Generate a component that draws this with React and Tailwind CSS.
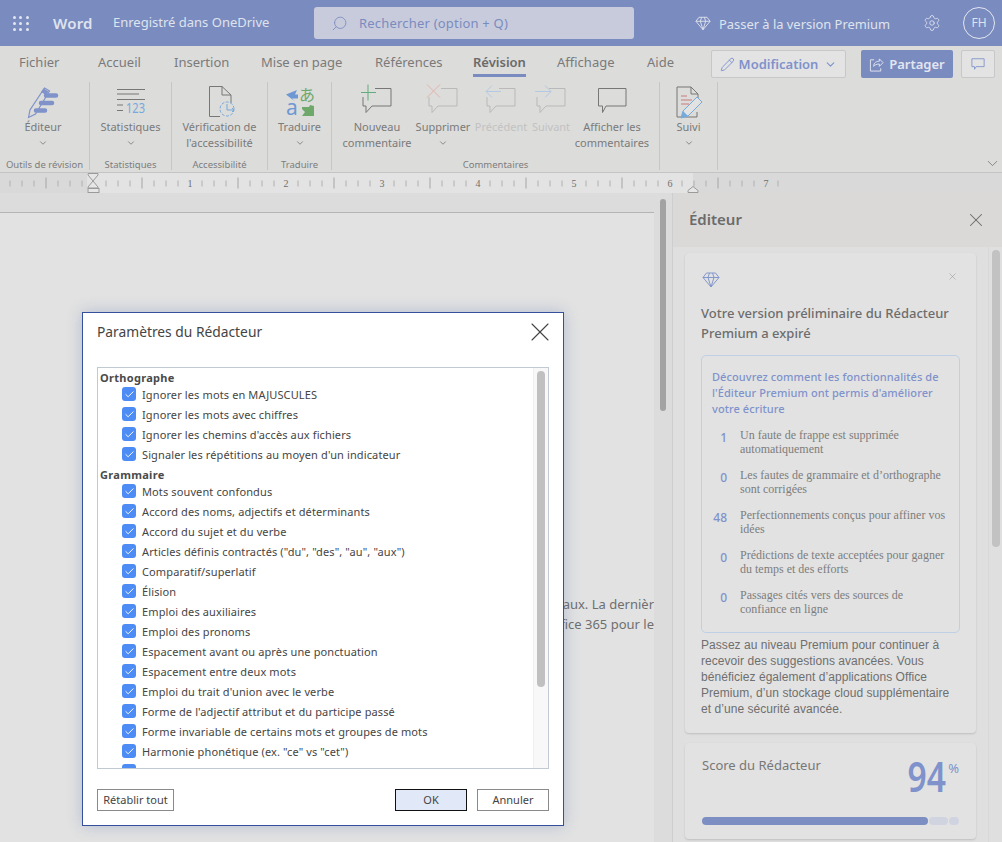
import { ChevronDown, Settings, Search, X, Pencil, Check } from 'lucide-react';

const tabs = [
  { label: 'Fichier', w: 'w-[79px]' },
  { label: 'Accueil', w: 'w-[76px]' },
  { label: 'Insertion', w: 'w-[87px]' },
  { label: 'Mise en page', w: 'w-[114px]' },
  { label: 'Références', w: 'w-[98px]' },
  { label: 'Révision', w: 'w-[84px]', active: true },
  { label: 'Affichage', w: 'w-[90px]' },
  { label: 'Aide', w: 'w-[64px]' },
];

const spelling = [
  'Ignorer les mots en MAJUSCULES',
  'Ignorer les mots avec chiffres',
  "Ignorer les chemins d'accès aux fichiers",
  "Signaler les répétitions au moyen d'un indicateur",
];

const grammar = [
  'Mots souvent confondus',
  'Accord des noms, adjectifs et déterminants',
  'Accord du sujet et du verbe',
  'Articles définis contractés ("du", "des", "au", "aux")',
  'Comparatif/superlatif',
  'Élision',
  'Emploi des auxiliaires',
  'Emploi des pronoms',
  'Espacement avant ou après une ponctuation',
  'Espacement entre deux mots',
  "Emploi du trait d'union avec le verbe",
  "Forme de l'adjectif attribut et du participe passé",
  'Forme invariable de certains mots et groupes de mots',
  'Harmonie phonétique (ex. "ce" vs "cet")',
  'Majuscules et minuscules dans les noms propres',
];

const stats = [
  { n: '1', text: 'Un faute de frappe est supprimée automatiquement' },
  { n: '0', text: 'Les fautes de grammaire et d’orthographe sont corrigées' },
  { n: '48', text: 'Perfectionnements conçus pour affiner vos idées' },
  { n: '0', text: 'Prédictions de texte acceptées pour gagner du temps et des efforts' },
  { n: '0', text: 'Passages cités vers des sources de confiance en ligne' },
];

function Diamond({ className, color }) {
  return (
    <svg viewBox="0 0 18 16" className={className} fill="none" stroke={color} strokeWidth="1">
      <path d="M4.5 1h9L17 5.5 9 15 1 5.5z" />
      <path d="M1 5.5h16M6 5.5L9 15l3-9.5M6 5.5L7.5 1M12 5.5L10.5 1" />
    </svg>
  );
}

function EditorIcon() {
  return (
    <svg viewBox="0 0 34 34" className="w-[34px] h-[34px]" fill="none">
      <path d="M2.5 32.5L4 25 18.5 3l5 3L9.5 29z" stroke="#7f92c9" strokeWidth="1.2" />
      <path d="M17.5 3.5l5 3-2.5 3.5-5-3z" fill="#7f92c9" />
      <path d="M20 10.5h10M15 18h11M10 25.5h9" stroke="#7f92c9" strokeWidth="4.5" strokeLinecap="round" />
    </svg>
  );
}

function StatsIcon() {
  return (
    <svg viewBox="0 0 30 30" className="w-[30px] h-[30px] overflow-visible" fill="none" stroke="#777">
      <path d="M1 2.5h28M1 7h22M1 12.5h28M1 18h6M1 23.5h6" />
      <text x="10" y="26" fontSize="13.5" textLength="19" lengthAdjust="spacingAndGlyphs" fill="#76a9dc" stroke="none" fontFamily="Noto Sans, sans-serif">123</text>
    </svg>
  );
}

function AccessIcon() {
  return (
    <svg viewBox="0 0 30 34" className="w-[30px] h-[34px]" fill="none">
      <path d="M15 31.5H4.5v-30H17l9 8.5v8" stroke="#777" />
      <path d="M17 1.5V10h9" stroke="#777" />
      <circle cx="22" cy="24" r="7" stroke="#76a9dc" strokeDasharray="3 1.5" />
      <path d="M22 19v6h7M27 23l2 2-2 2" stroke="#76a9dc" />
    </svg>
  );
}

function TranslateIcon() {
  return (
    <svg viewBox="0 0 30 32" className="w-[30px] h-[32px] overflow-visible" fill="none">
      <path d="M1 8.5L12 4l-2 4.5h3v4H7l3 3z" fill="#6d98d4" />
      <text x="1" y="29" fontSize="21" fill="#6d98d4" fontFamily="Noto Sans, sans-serif">a</text>
      <text x="14" y="15" fontSize="16" fill="#6fa86b" fontFamily="Noto Sans CJK JP, sans-serif">あ</text>
      <path d="M29 30H17l3-4-3-3v-2h7l1-2 4 1z" fill="#6fa86b" />
    </svg>
  );
}

function Bubble({ kind, disabled }) {
  const stroke = disabled ? '#b9b9b9' : '#777';
  return (
    <svg viewBox="0 0 36 30" className="w-[36px] h-[30px] overflow-visible" fill="none">
      <path d="M16 1.5H32V19H13l-6 6.5V19H4V10" stroke={stroke} strokeWidth="1" />
      {kind === 'new' && <path d="M9 -2.5v16M2 5.5h15" stroke="#62ad7c" />}
      {kind === 'delete' && <path d="M2 -2.5l13 13M15 -2.5L2 10.5" stroke="#e3b3ad" />}
      {kind === 'prev' && <path d="M3 4.5h15M9 -1.5L3 4.5l6 6" stroke="#b3c9e2" />}
      {kind === 'next' && <path d="M2 4.5h16M12 -1.5l6 6-6 6" stroke="#b3c9e2" />}
    </svg>
  );
}

function PlainBubble() {
  return (
    <svg viewBox="0 0 30 30" className="w-[30px] h-[30px]" fill="none">
      <path d="M1.5 1.5H29V19H9l-3.5 6.5V19H1.5z" stroke="#777" />
    </svg>
  );
}

function TrackIcon() {
  return (
    <svg viewBox="0 0 30 34" className="w-[30px] h-[34px]" fill="none">
      <path d="M3 32V2h14l7 7v6M17 2v7h7M3 32h20v-5" stroke="#777" />
      <path d="M7 11h6M7 15h11M7 19h8" stroke="#cb7b7b" />
      <path d="M7 33l2-7L23 12l5 5-14 14z" stroke="#76a9dc" fill="#e2e2e2" />
      <path d="M7 33l2-7 5 5z" fill="#76a9dc" />
    </svg>
  );
}

function RibbonButton({ w, icon, lines, menu, disabled }) {
  return (
    <div className={`${w} flex flex-col items-center shrink-0`}>
      <div className="h-[35px] flex items-center justify-center">{icon}</div>
      {lines.map((l) => (
        <span key={l} className={`h-4 leading-4 text-[11px] whitespace-nowrap ${disabled ? 'text-[#c2c2c2]' : 'text-[#7a7a7a]'}`}>
          {l}
        </span>
      ))}
      {menu && (
        <span className="h-4 flex items-center">
          <ChevronDown size={10} className="text-[#7a7a7a]" />
        </span>
      )}
    </div>
  );
}

function RibbonGroup({ w, label, children }) {
  return (
    <div className={`${w} h-[88px] mt-[2px] shrink-0 flex flex-col border-r border-[#c6c6c5]`}>
      <div className="flex-1 flex pt-[2px]">{children}</div>
      <div className="h-[13px] leading-[13px] -mb-[1px] text-[9.5px] text-center text-[#7d7d7d] whitespace-nowrap">{label}</div>
    </div>
  );
}

function Ruler() {
  const ticks = [];
  for (let k = -7; k <= 57; k++) {
    if (k === 0) continue;
    const x = 94 + k * 12;
    if (k % 8 === 0) {
      ticks.push(
        <text key={k} x={x} y="187" textAnchor="middle" fontSize="10" fill="#6f6f6f" fontFamily="Liberation Serif, serif">
          {k / 8}
        </text>
      );
    } else if (k % 4 === 0) {
      ticks.push(<path key={k} d={`M${x} 177.5v11`} stroke="#a5a5a5" />);
    } else {
      ticks.push(<path key={k} d={`M${x} 180.5v6`} stroke="#b0b0b0" />);
    }
  }
  return (
    <div className="h-[21px] shrink-0 border-t border-[#c4c4c4] bg-[#d9d9d9] shadow-[0_1px_1px_rgba(0,0,0,0.08)]">
      <svg viewBox="0 173 1002 20" className="w-[1002px] h-[20px]" preserveAspectRatio="none">
        <rect x="87" y="173" width="606" height="20" fill="#e3e3e3" />
        {ticks}
        <path d="M88 173.5h10v1.5l-5 6 5 6v1H88v-1l5-6-5-6z" fill="#e6e6e6" stroke="#9a9a9a" />
        <rect x="88" y="188.5" width="11" height="4" fill="#e6e6e6" stroke="#9a9a9a" />
        <path d="M688 192.5v-2l5-4 5 4v2z" fill="#e6e6e6" stroke="#9a9a9a" />
      </svg>
    </div>
  );
}

function CheckRow({ label }) {
  return (
    <div className="h-5 ml-[24px] flex items-center gap-[6px] whitespace-nowrap">
      <span className="w-[14px] h-[14px] rounded-[3px] bg-[#4d8cf5] flex items-center justify-center shrink-0">
        <Check size={11} strokeWidth={2} className="text-white" />
      </span>
      <span className="pt-[2px] text-[11px] tracking-[0.12px] text-[#454545]">{label}</span>
    </div>
  );
}

function Dialog() {
  return (
    <div className="absolute left-[82px] top-[312px] w-[482px] h-[514px] bg-white border border-[#34509c] shadow-[0_0_14px_rgba(70,100,170,0.3)] flex flex-col">
      <div className="h-[54px] pl-[14px] pr-[7px] pb-[16px] flex items-center justify-between shrink-0">
        <span className="text-[13.8px] text-[#444]">Paramètres du Rédacteur</span>
        <X size={32} strokeWidth={0.8} className="text-[#444]" />
      </div>
      <div className="mx-[14px] w-[452px] h-[402px] shrink-0 border border-[#c3c9d3] flex overflow-hidden">
        <div className="flex-1 overflow-hidden pt-[3px]">
          <div className="ml-[2px] h-[13px] leading-[13px] text-[11px] font-bold tracking-[0.3px] text-[#4a4a4a]">Orthographe</div>
          {spelling.map((s) => (
            <CheckRow key={s} label={s} />
          ))}
          <div className="ml-[2px] mt-[4px] h-[13px] leading-[13px] text-[11px] font-bold tracking-[0.3px] text-[#4a4a4a]">Grammaire</div>
          {grammar.map((s) => (
            <CheckRow key={s} label={s} />
          ))}
        </div>
        <div className="w-[15px] shrink-0 bg-[#f8f8f8] border-l border-[#efefef] pt-[3px] pl-[3px]">
          <div className="w-[8px] h-[316px] rounded-full bg-[#c0c0c0]" />
        </div>
      </div>
      <div className="mx-[14px] mt-[20px] flex items-center text-[11px] text-[#444]">
        <button className="w-[77px] h-[22px] border border-[#8a8a8a]">Rétablir tout</button>
        <button className="ml-auto w-[72px] h-[22px] border border-[#111] bg-[#e1e8f7]">OK</button>
        <button className="ml-[10px] w-[72px] h-[22px] border border-[#8a8a8a]">Annuler</button>
      </div>
    </div>
  );
}

function EditorPanel() {
  return (
    <div className="flex-1 flex flex-col min-w-0">
      <div className="h-[54px] shrink-0 bg-[#dad9d7] pl-[16px] pr-[15px] pb-[1px] flex items-center justify-between">
        <span className="text-[15px] font-semibold text-[#6b6b6b]">Éditeur</span>
        <X size={22} strokeWidth={1.1} className="text-[#6b6b6b]" />
      </div>
      <div className="flex-1 flex overflow-hidden bg-[#dfdfdf]">
        <div className="w-[316px] shrink-0 border-r border-[#d8d8d8] pl-[12px] pt-[6px]">
          <div className="w-[291px] h-[480px] bg-[#e2e2e2] rounded-[4px] shadow-[0_1px_2px_rgba(0,0,0,0.15)] px-[16px] pt-[19px]">
            <div className="h-[31px] flex items-start justify-between pr-[2px]">
              <Diamond className="w-[18px] h-[16px] ml-[1px]" color="#8497cc" />
              <X size={11} strokeWidth={1} className="text-[#8a8a8a] mt-[-1px]" />
            </div>
            <p className="text-[13px] leading-5 font-medium text-[#6d6d6d]">
              Votre version préliminaire du Rédacteur Premium a expiré
            </p>
            <div className="mt-[12px] w-[259px] h-[278px] border border-[#bfd0e6] rounded-[5px] pt-[13px] pl-[10px] pr-[6px]">
              <p className="text-[11px] leading-4 font-medium tracking-[0.08px] text-[#7f92cb]">
                Découvrez comment les fonctionnalités de l'Éditeur Premium ont permis d'améliorer votre écriture
              </p>
              <div className="mt-[11px] -ml-[10px] flex flex-col gap-[12px]">
                {stats.map((s) => (
                  <div key={s.text} className="flex h-[28px]">
                    <span className="w-[25px] shrink-0 text-right text-[12px] leading-5 font-medium text-[#7f92cb]">{s.n}</span>
                    <span className="ml-[13px] w-[210px] text-[12px] leading-[14px] text-[#7d7d7d] font-[Liberation_Serif,serif]">{s.text}</span>
                  </div>
                ))}
              </div>
            </div>
            <p className="mt-[4px] text-[12px] leading-4 tracking-[0.05px] text-[#6f6f6f] font-[Liberation_Sans,sans-serif]">
              Passez au niveau Premium pour continuer à recevoir des suggestions avancées. Vous bénéficiez également d’applications Office Premium, d’un stockage cloud supplémentaire et d’une sécurité avancée.
            </p>
          </div>
          <div className="mt-[10px] w-[291px] h-[96px] bg-[#e2e2e2] rounded-[4px] shadow-[0_1px_2px_rgba(0,0,0,0.15)] pl-[17px] pr-[17px] pt-[12px]">
            <div className="h-[62px] flex items-start justify-between">
              <span className="text-[13px] leading-5 text-[#777]">Score du Rédacteur</span>
              <div className="flex items-start -mt-[7px]">
                <span className="text-[42px] leading-[56px] font-semibold text-[#7f92cb] scale-x-[0.8] origin-right">94</span>
                <span className="text-[13px] leading-4 mt-[12px] ml-[2px] text-[#7f92cb]">%</span>
              </div>
            </div>
            <div className="flex h-[8px] gap-[1px]">
              <div className="w-[226px] rounded-full bg-[#7d8fc2]" />
              <div className="w-[19px] rounded-full bg-[#d0d4e0]" />
              <div className="w-[10px] rounded-full bg-[#d0d4e0]" />
            </div>
          </div>
        </div>
        <div className="flex-1 pt-[3px] pl-[3px]">
          <div className="w-[8px] h-[297px] rounded-full bg-[#c2c2c2]" />
        </div>
      </div>
    </div>
  );
}

export default function App() {
  return (
    <div className="relative w-[1002px] h-[842px] overflow-hidden flex flex-col bg-[#e2e2e2] font-[Noto_Sans,sans-serif]">
      {/* Title bar */}
      <header className="h-[46px] shrink-0 bg-[#7a8bbf] flex items-center text-[#dfe3ee]">
        <div className="ml-[13px] w-[16px] grid grid-cols-3 gap-[3px]">
          {[1, 2, 3, 4, 5, 6, 7, 8, 9].map((d) => (
            <span key={d} className="w-[3px] h-[3px] rounded-full bg-[#e3e6f0]" />
          ))}
        </div>
        <span className="ml-[24px] w-[60px] text-[15px] font-semibold tracking-[0.2px]">Word</span>
        <span className="text-[13px] w-[201px] whitespace-nowrap">Enregistré dans OneDrive</span>
        <div className="w-[320px] h-[32px] rounded-[3px] bg-[#c8cbdc] flex items-center pl-[17px]">
          <Search size={17} strokeWidth={1.2} className="text-[#7a8bbf] -scale-x-100" />
          <span className="ml-[11px] pt-[2px] text-[13px] tracking-[0.2px] text-[#7a8bbf]">Rechercher (option + Q)</span>
        </div>
        <Diamond className="ml-[61px] w-[16px] h-[15px]" color="#e3e6f0" />
        <span className="ml-[8px] pt-[3px] w-[204px] text-[12.9px] whitespace-nowrap">Passer à la version Premium</span>
        <Settings size={18} strokeWidth={1.1} className="text-[#e3e6f0]" />
        <div className="ml-[22px] w-[32px] h-[32px] rounded-full border border-[#e3e6f0] flex items-center justify-center text-[12px]">FH</div>
      </header>

      {/* Tabs */}
      <div className="h-[34px] shrink-0 bg-[#dcdcda] flex items-start pl-[19px] text-[13px] text-[#7a7a7a]">
        {tabs.map((t) => (
          <div key={t.label} className={`${t.w} pt-[6px] shrink-0`}>
            <span className={`inline-block leading-5 ${t.active ? 'pb-[2px] border-b-[3px] border-[#7a8bbf] font-semibold text-[#6a6a6a]' : ''}`}>
              {t.label}
            </span>
          </div>
        ))}
        <button className="mt-[4px] w-[135px] h-[28px] shrink-0 border border-[#c8c8c8] bg-[#e3e3e3] rounded-[2px] flex items-center justify-center gap-[4px] text-[#7f92cb] font-semibold">
          <Pencil size={15} strokeWidth={1.5} />
          <span className="pt-[1px]">Modification</span>
          <ChevronDown size={13} className="ml-[2px]" />
        </button>
        <button className="ml-[15px] mt-[4px] w-[92px] h-[28px] shrink-0 bg-[#7a8bbf] rounded-[2px] flex items-center justify-center gap-[5px] text-[#e3e6f0] font-semibold">
          <svg viewBox="0 0 16 16" className="w-[15px] h-[15px]" fill="none" stroke="#e3e6f0">
            <path d="M5.5 3H1.5v12h11v-3M5 10c0-4 3-5.5 6-5.5V2l4 4-4 4V7.5c-3 0-5 1-6 2.5z" />
          </svg>
          <span className="pt-[1px]">Partager</span>
        </button>
        <button className="ml-[8px] mt-[4px] w-[34px] h-[28px] shrink-0 border border-[#c8c8c8] bg-[#e3e3e3] rounded-[2px] flex items-center justify-center">
          <svg viewBox="0 0 16 16" className="w-[14px] h-[14px]" fill="none" stroke="#7f92cb">
            <path d="M1 2h14v9H6l-2 3v-3H1z" />
          </svg>
        </button>
      </div>

      {/* Ribbon */}
      <div className="h-[92px] shrink-0 bg-[#dcdcda] flex">
        <RibbonGroup w="w-[90px]" label="Outils de révision">
          <RibbonButton w="w-[86px]" icon={<EditorIcon />} lines={['Éditeur']} menu />
        </RibbonGroup>
        <RibbonGroup w="w-[82px]" label="Statistiques">
          <RibbonButton w="w-[81px]" icon={<StatsIcon />} lines={['Statistiques']} menu />
        </RibbonGroup>
        <RibbonGroup w="w-[96px]" label="Accessibilité">
          <RibbonButton w="w-[95px]" icon={<AccessIcon />} lines={['Vérification de', "l'accessibilité"]} />
        </RibbonGroup>
        <RibbonGroup w="w-[64px]" label="Traduire">
          <RibbonButton w="w-[63px]" icon={<TranslateIcon />} lines={['Traduire']} menu />
        </RibbonGroup>
        <RibbonGroup w="w-[328px]" label="Commentaires">
          <div className="w-[10px] shrink-0" />
          <RibbonButton w="w-[70px]" icon={<Bubble kind="new" />} lines={['Nouveau', 'commentaire']} />
          <RibbonButton w="w-[62px]" icon={<Bubble kind="delete" disabled />} lines={['Supprimer']} menu />
          <RibbonButton w="w-[54px]" icon={<Bubble kind="prev" disabled />} lines={['Précédent']} disabled />
          <RibbonButton w="w-[46px]" icon={<Bubble kind="next" disabled />} lines={['Suivant']} disabled />
          <RibbonButton w="w-[76px]" icon={<PlainBubble />} lines={['Afficher les', 'commentaires']} />
        </RibbonGroup>
        <RibbonGroup w="w-[58px]" label="">
          <RibbonButton w="w-[57px]" icon={<TrackIcon />} lines={['Suivi']} menu />
        </RibbonGroup>
        <div className="flex-1 flex items-end justify-end pr-[1px]">
          <ChevronDown size={17} strokeWidth={1.2} className="text-[#777]" />
        </div>
      </div>

      <Ruler />

      {/* Document and panel */}
      <div className="flex-1 flex min-h-0">
        <div className="w-[654px] shrink-0 flex flex-col">
          <div className="h-[20px] shrink-0 bg-[#dcdcdc] border-b border-[#b4b4b4]" />
          <div className="flex-1 bg-[#e2e2e2] overflow-hidden pt-[381px] text-[13px] leading-5 text-[#6f6f6f] whitespace-nowrap">
            <div className="flex justify-end">aux. La dernièr</div>
            <div className="flex justify-end">fice 365 pour le</div>
            <div className="pl-[148px] pt-[173px] text-[12px]">p</div>
          </div>
        </div>
        <div className="w-[19px] shrink-0 bg-[#dcdcdc] border-r border-[#cecece] pt-[6px] pl-[6px]">
          <div className="w-[6px] h-[212px] rounded-full bg-[#a3a3a3]" />
        </div>
        <EditorPanel />
      </div>

      <Dialog />
    </div>
  );
}
